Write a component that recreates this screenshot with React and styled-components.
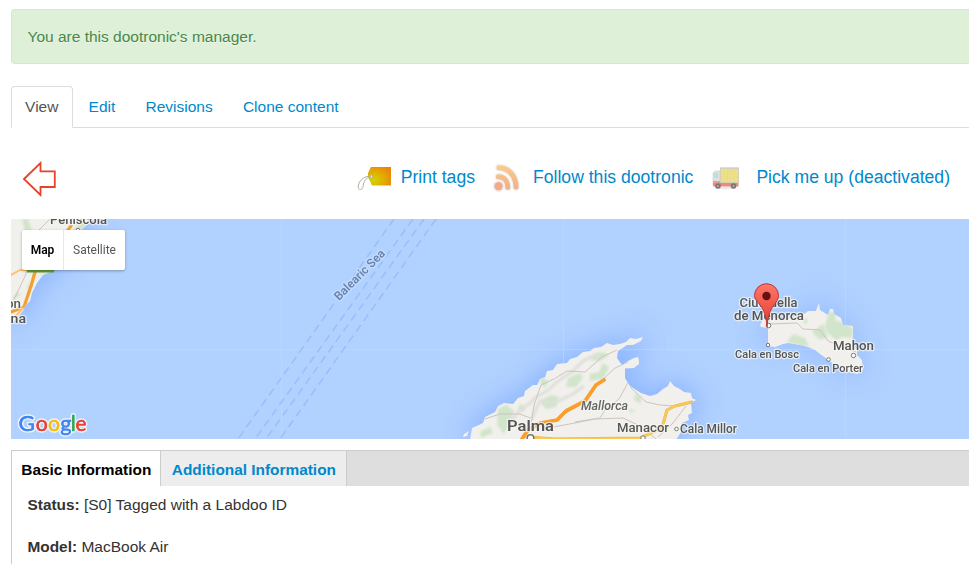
import React from "react";
import styled, { createGlobalStyle, css } from "styled-components";

const GlobalStyle = createGlobalStyle`
  * { box-sizing: border-box; }
  html { overflow: hidden; }
  body {
    margin: 0;
    background: #fff;
    color: #333;
    font: 15.5px/21px "Liberation Sans", Arial, sans-serif;
  }
`;

const Page = styled.main`
  width: 969px;
  height: 564px;
  overflow: hidden;
  padding: 9px 0 0 11px;
`;

const Alert = styled.div`
  height: 55px;
  padding: 16px 15.5px;
  border: 1px solid #d6e9c6;
  border-right: 0;
  border-radius: 4px 0 0 4px;
  background: #dff0d8;
  color: #468847;
  text-shadow: 0 1px 0 rgba(255, 255, 255, 0.5);
`;

const Tabs = styled.nav`
  display: flex;
  height: 42px;
  margin-top: 22px;
  border-bottom: 1px solid #ddd;
`;

const Tab = styled.a`
  height: 42px;
  margin-right: 2px;
  padding: 9px 13.1px;
  border: 1px solid transparent;
  border-radius: 4px 4px 0 0;
  color: #0088cc;
  ${(p) =>
    p.$active &&
    css`
      border-color: #ddd;
      border-bottom-color: #fff;
      background: #fff;
      color: #555;
    `}
`;

const Toolbar = styled.div`
  display: flex;
  align-items: center;
  height: 91px;
  padding: 11px 19px 0 11px;
`;

const Actions = styled.div`
  display: flex;
  align-items: center;
  margin-left: auto;
`;

const Action = styled.a`
  display: flex;
  align-items: center;
  gap: ${(p) => p.$gap}px;
  margin-left: ${(p) => p.$before || 0}px;
  color: #0088cc;
  font-size: 17.6px;
  line-height: 24px;
  white-space: nowrap;

  span {
    padding-bottom: 4px;
  }
`;

const MapPanel = styled.section`
  position: relative;
  height: 220px;
  overflow: hidden;

  > svg {
    display: block;
  }
`;

const MapSwitch = styled.div`
  position: absolute;
  left: 11px;
  top: 11px;
  display: flex;
  height: 40px;
  border-radius: 2px;
  background: #fff;
  box-shadow: 0 1px 3px rgba(0, 0, 0, 0.3);
`;

const MapMode = styled.button`
  width: ${(p) => p.$width}px;
  padding: 0;
  border: 0;
  border-left: ${(p) => (p.$active ? "0" : "1px solid #e8e8e8")};
  background: transparent;
  color: ${(p) => (p.$active ? "#000" : "#565656")};
  font: ${(p) => (p.$active ? 600 : 400)} 12px Roboto, sans-serif;
`;

const InfoPanel = styled.section`
  height: 114px;
  margin-top: 11px;
  border: solid #ccc;
  border-width: 1px 0 0 1px;
`;

const InfoTabs = styled.div`
  display: flex;
  height: 35px;
  background: #dedede;
  font-size: 15.4px;
`;

const InfoTab = styled.a`
  width: ${(p) => p.$width}px;
  padding-left: ${(p) => p.$inset}px;
  border-right: 1px solid #ccc;
  background: ${(p) => (p.$active ? "#fff" : "#ededed")};
  color: ${(p) => (p.$active ? "#000" : "#0088cc")};
  font-weight: bold;
  line-height: 38px;
  white-space: nowrap;
`;

const Field = styled.p`
  margin: 0 0 21px;
  padding-left: 15.5px;

  b {
    font-size: 15.4px;
  }

  ${InfoTabs} + & {
    margin-top: 8px;
  }
`;

const BackArrow = () => (
  <svg width="36" height="36" viewBox="0 0 36 36" fill="none" stroke="#e8432a" strokeWidth="1.8">
    <path d="M2 18 18.5 2V10.3H32.8V26H18.5V34Z" />
  </svg>
);

const TagIcon = () => (
  <svg width="35" height="28" viewBox="0 0 35 28">
    <defs>
      <radialGradient id="tag" cx=".25" cy=".7" r=".85">
        <stop offset="0" stopColor="#d2d300" />
        <stop offset=".5" stopColor="#e2ae00" />
        <stop offset="1" stopColor="#ea850b" />
      </radialGradient>
    </defs>
    <path d="M14 2H34V20.5H15L11 12V8Z" fill="url(#tag)" />
    <circle cx="14" cy="11.5" r="1.7" fill="#ece9df" stroke="#9c978d" strokeWidth=".6" />
    <path
      d="M14 11C7 11 1 16 1.2 22.5C1.5 26 6 25 6.3 20.5C6.5 16 9 13 14 11.5"
      fill="none"
      stroke="#b3aca5"
      strokeWidth="1"
    />
  </svg>
);

const FeedIcon = () => (
  <svg width="30" height="30" viewBox="0 0 30 30">
    <defs>
      <linearGradient id="feed" gradientUnits="userSpaceOnUse" x1="0" y1="1" x2="0" y2="28">
        <stop stopColor="#f9cd8c" />
        <stop offset="1" stopColor="#f2ab88" />
      </linearGradient>
    </defs>
    <g fill="none" strokeLinecap="round" stroke="#efefef" strokeWidth="7.4">
      <path d="M8 3.7C17.5 3.7 25 12 25 23M7.4 12.7C13 12.7 16.8 17 16.8 23.3" />
      <circle cx="7.6" cy="22.3" r="2.2" />
    </g>
    <g fill="none" strokeLinecap="round" stroke="url(#feed)" strokeWidth="5">
      <path d="M8 3.7C17.5 3.7 25 12 25 23M7.4 12.7C13 12.7 16.8 17 16.8 23.3" />
    </g>
    <circle cx="7.6" cy="22.3" r="4.2" fill="#f2aa88" />
  </svg>
);

const TruckIcon = () => (
  <svg width="28" height="24" viewBox="0 0 28 24">
    <ellipse cx="13" cy="21" rx="11" ry="1.5" fill="#eaeaea" />
    <path d="M1 6 3 4H8V18H1Z" fill="#e2e1dd" stroke="#cdcac5" strokeWidth=".6" />
    <path d="M2 6H6V11H2Z" fill="#b3dfee" />
    <path d="M1 14H9V15.5H26.5V19.5H1Z" fill="#ea8a80" />
    <path d="M1 14H8V16H1Z" fill="#ef9a8d" />
    <path d="M8.5 1H26.5V15.5H8.5Z" fill="#ede08b" stroke="#d5ceb8" strokeWidth="1" />
    <path d="M12 2V15M15.5 2V15M19 2V15M22.5 2V15" stroke="#e8da82" strokeWidth=".7" />
    <path d="M8 1.3H27" stroke="#d5ceba" strokeWidth="1.4" />
    {[6, 21.5].map((x) => (
      <g key={x}>
        <circle cx={x} cy="19" r="2.8" fill="#7b7978" />
        <circle cx={x} cy="19" r="1.1" fill="#aaa8a6" />
      </g>
    ))}
  </svg>
);

const MALLORCA =
  "M470 440 472 428 483 423 485 417 495 412 498 406 504 403 513 404 518 398 524 396 525 391 533 385 537 385 540 379 545 377 547 371 553 370 557 364 567 363 570 359 577 357 583 352 590 351 594 348 601 347 607 343 613 345 620 344 626 342 630 338 636 339 643 337 641 341 633 345 627 345 618 351 617 358 622 365 628 361 634 358 638 357 639 361 639 364 634 368 625 368.5 625 378 630 386 641 393 650 396 657 394 663 389 668 386 670 381 674 386 680 389 684 392 691 393 692 398 696 400 691 403 692 413 688 415 689 420 682 423 681 432 676 440Z";
const MENORCA =
  "M760 325 763 320 778 318 784 320 795 316 804 314 808 311 816 311 817 308 819 303 820 310 828 315 830 309 833 309 834 314 841 318 843 325 853 326 853 335 852 347 857 350 857 355 862 360 863 370 857 374 849 372 843 371 835 365 827 359 820 354 815 350 808 347 800 345 788 343 783 344 775 347 768 346 768 328 761 327Z";
const MAINLAND =
  "M11 219H94L87 225 80 231 72 247 62 263 53 271 43 275 37 283 32 293 30 301 25 306 23 311 17 318 11 323Z";

const ferryLines = [
  [394, 219, 238, 439],
  [413, 219, 255, 439],
  [424, 219, 266, 439],
  [436, 219, 280, 439],
];

const places = [
  { name: "Peniscola", x: 50, y: 224, size: 12.5, width: 57 },
  { name: "on", x: 6, y: 308, size: 13, width: 15 },
  { name: "ana", x: 3, y: 322.5, size: 13, width: 23 },
  { name: "Ciutadella", x: 739.5, y: 307, size: 12.5, width: 58 },
  { name: "de Menorca", x: 734, y: 320, size: 12.5, width: 70 },
  { name: "Mahon", x: 833, y: 350, size: 12.5, width: 41 },
  { name: "Cala en Bosc", x: 735, y: 357.5, size: 11, width: 64 },
  { name: "Cala en Porter", x: 793, y: 372, size: 11, width: 70 },
  { name: "Palma", x: 507, y: 431, size: 15.5, width: 47, bold: true },
  { name: "Manacor", x: 617, y: 432, size: 12.5, width: 52 },
  { name: "Cala Millor", x: 680, y: 433, size: 12, width: 57 },
  { name: "Mallorca", x: 581, y: 410, size: 12, width: 47, italic: true },
];

const PlaceLabel = styled.text`
  font-family: Roboto, sans-serif;
  font-size: ${(p) => p.$size}px;
  font-weight: ${(p) => (p.$bold ? 600 : 500)};
  font-style: ${(p) => (p.$italic ? "italic" : "normal")};
  fill: ${(p) => (p.$italic ? "#656565" : "#555")};
  stroke: #f6f6f2;
  stroke-width: 2.5px;
  stroke-opacity: 0.7;
  stroke-linejoin: round;
  paint-order: stroke;
`;

const SeaLabel = styled.text`
  font: 500 12px Roboto, sans-serif;
  fill: #6580a9;
  stroke: #c2daff;
  stroke-width: 3px;
  stroke-linejoin: round;
  paint-order: stroke;
`;

const LogoText = styled.text`
  font: 400 22px Lato, sans-serif;
  stroke-linejoin: round;
`;

const logoLetters = [
  ["G", 18.5, "#4285f4", 16.5],
  ["o", 35.7, "#ea4335", 12],
  ["o", 47.9, "#fbbc05", 12],
  ["g", 60.2, "#4285f4", 11.3],
  ["l", 70.8, "#34a853", 5],
  ["e", 75.5, "#ea4335", 11],
];

const MapDrawing = () => (
  <svg width="958" height="220" viewBox="11 219 958 220">
    <defs>
      <filter id="shore" x="-30%" y="-50%" width="160%" height="200%">
        <feGaussianBlur stdDeviation="13" />
      </filter>
      <filter id="soft">
        <feGaussianBlur stdDeviation="1" />
      </filter>
      <clipPath id="land">
        <path d={MAINLAND + MALLORCA + MENORCA} />
      </clipPath>
      <linearGradient id="pin" x1="0" y1="0" x2="0" y2="1">
        <stop stopColor="#ff776b" />
        <stop offset="1" stopColor="#e5382d" />
      </linearGradient>
    </defs>
    <rect x="11" y="219" width="958" height="220" fill="#b1d1ff" />
    <g filter="url(#shore)" fill="#719fff" stroke="#719fff" strokeWidth="7" opacity=".58">
      <path d={MALLORCA} />
      <path d={MENORCA} opacity=".6" />
      <path d={MAINLAND} />
    </g>
    <path d="M11 349.5H969M281.5 219V439M563.5 219V439M845.5 219V439" stroke="#c4dafa" strokeWidth=".8" opacity=".65" />
    <g stroke="#9bbdfb" strokeWidth="1.5" strokeDasharray="8 5">
      {ferryLines.map(([x1, y1, x2, y2]) => (
        <line key={x1} x1={x1} y1={y1} x2={x2} y2={y2} />
      ))}
    </g>
    <path d={MAINLAND + MALLORCA + MENORCA + "M464 434 469 431 467 436 463 437Z"} fill="#f1f0ec" />
    <g clipPath="url(#land)">
      <g fill="#d1e5cb" filter="url(#soft)">
        <path d="M498 409 506 405 514 411 511 421 504 434 497 425ZM520 404 525 407 524 412 518 409ZM541 400 551 395 559 397 556 407 546 409 541 403ZM542 376 548 382 545 388 540 383ZM568 378 580 373 583 378 576 387 566 387ZM590 374 599 372 603 363 609 367 603 379 590 381ZM592 356 602 352 609 355 600 361 590 360ZM480 432 490 427 493 433 481 438ZM635 393 641 397 641 404 634 400ZM628 409 636 410 631 413Z" />
        <path d="M787 342 793 334 805 338 809 346 802 346ZM829 312 836 312 835 320 846 324 853 329 852 338 843 337 836 340 828 333 825 326ZM812 332 823 324 828 337 820 340ZM802 320 808 318 806 325Z" />
        <path d="M22 219 28 219 32 231 26 236ZM63 240 84 219 88 225 74 235ZM27 286 33 281 29 293ZM11 300 18 291 20 296ZM38 276 48 270 44 275Z" />
      </g>
      <g fill="none" stroke="#dfdfda" strokeWidth="3" filter="url(#soft)">
        <path d="M507 427 519 411 530 403 536 397 547 391 557 382 573 371 583 361 599 353M531 420 540 401 552 404 573 394 584 386" />
      </g>
      <g fill="none" stroke="#ccc5bd" strokeWidth="1">
        <path d="M485 419 500 414 520 414 530 418M531 425 534 405 541 385 554 379 567 371 585 372 602 357 617 350M575 422 600 418 605 410 619 399 630 379 626 368M553 427 575 423 595 419 623 418 640 426 656 439M630 387 646 402 660 405 675 406M686 406 673 423 658 437M600 382 615 368 628 362" />
        <path d="M768 324 797 323 803 329 820 330 828 341 840 346 856 352M28 250 37 232 50 219M11 306 26 274 26 257" />
      </g>
      <g fill="none" strokeLinecap="round" strokeLinejoin="round">
        <path d="M528 437 555 439 640 438 662 428 667 410 675 406 692 402" stroke="#e5b54c" strokeWidth="3" />
        <path d="M528 437 555 439 640 438 662 428 667 410 675 406 692 402" stroke="#fbc853" strokeWidth="2.2" />
        <path d="M522 439 528 430 541 423 557 420 566 411 585 401 596 385 604 380" stroke="#eea03e" strokeWidth="3.8" />
        <path d="M522 439 528 430 541 423 557 420 566 411 585 401 596 385 604 380" stroke="#ff9d24" strokeWidth="2.6" />
        <path d="M71 226 61 239 35 272 31 286 24 307 11 312" stroke="#f2a035" strokeWidth="3.2" />
        <path d="M11 275 20 270H34M23 308 15 317" stroke="#ffc06b" strokeWidth="2" />
      </g>
    </g>
    <path d="M26 264H55L54 272.5H27Z" fill="#61a138" />
    <g>
      {places.map((p) => (
        <PlaceLabel
          key={p.name}
          x={p.x}
          y={p.y}
          textLength={p.width}
          lengthAdjust="spacingAndGlyphs"
          $size={p.size}
          $bold={p.bold}
          $italic={p.italic}
        >
          {p.name}
        </PlaceLabel>
      ))}
    </g>
    <g fill="#fff" stroke="#777" strokeWidth="1">
      <circle cx="768.5" cy="325.5" r="2.3" />
      <circle cx="768" cy="345" r="1.7" />
      <circle cx="853.5" cy="355.5" r="2.2" />
      <circle cx="828.5" cy="359.5" r="1.8" />
      <circle cx="676.5" cy="429" r="1.8" />
      <circle cx="643" cy="438" r="2.2" />
      <circle cx="530.5" cy="438" r="3.3" strokeWidth="1.5" />
      <circle cx="78" cy="230" r="1.8" />
    </g>
    <SeaLabel transform="translate(339 301) rotate(-45)" textLength="66" lengthAdjust="spacingAndGlyphs">
      Balearic Sea
    </SeaLabel>
    <path
      d="M767 327C766.2 315 764 311 760.5 305.5C757 301 754.5 299 754.5 295.5A12 11.8 0 0 1 778.5 295.5C778.5 299 776.5 302 773.5 305.5C770 311 767.8 316 767 327Z"
      fill="url(#pin)"
      stroke="#b8372f"
      strokeWidth="1"
    />
    <circle cx="766.5" cy="296" r="4.2" fill="#66120e" />
    <g>
      {logoLetters.map(([letter, x, color, width], i) => (
        <LogoText
          key={i}
          x={x}
          y="431"
          textLength={width}
          lengthAdjust="spacingAndGlyphs"
          fill={color}
          stroke="#e9f1fd"
          strokeWidth="3.5"
          paintOrder="stroke"
        >
          {letter}
        </LogoText>
      ))}
      {logoLetters.map(([letter, x, color, width], i) => (
        <LogoText
          key={i}
          x={x}
          y="431"
          textLength={width}
          lengthAdjust="spacingAndGlyphs"
          fill={color}
          stroke={color}
          strokeWidth=".4"
          aria-hidden="true"
        >
          {letter}
        </LogoText>
      ))}
    </g>
  </svg>
);

export default function App() {
  return (
    <Page>
      <GlobalStyle />
      <Alert>You are this dootronic's manager.</Alert>
      <Tabs>
        <Tab $active>View</Tab>
        <Tab>Edit</Tab>
        <Tab>Revisions</Tab>
        <Tab>Clone content</Tab>
      </Tabs>
      <Toolbar>
        <BackArrow />
        <Actions>
          <Action $gap={9}>
            <TagIcon />
            <span>Print tags</span>
          </Action>
          <Action $gap={12} $before={16}>
            <FeedIcon />
            <span>Follow this dootronic</span>
          </Action>
          <Action $gap={16} $before={19}>
            <TruckIcon />
            <span>Pick me up (deactivated)</span>
          </Action>
        </Actions>
      </Toolbar>
      <MapPanel>
        <MapDrawing />
        <MapSwitch>
          <MapMode $active $width={41}>Map</MapMode>
          <MapMode $width={62}>Satellite</MapMode>
        </MapSwitch>
      </MapPanel>
      <InfoPanel>
        <InfoTabs>
          <InfoTab $active $width={149} $inset={9.3}>Basic Information</InfoTab>
          <InfoTab $width={186} $inset={10.8}>Additional Information</InfoTab>
        </InfoTabs>
        <Field><b>Status:</b> [S0] Tagged with a Labdoo ID</Field>
        <Field><b>Model:</b> MacBook Air</Field>
      </InfoPanel>
    </Page>
  );
}
